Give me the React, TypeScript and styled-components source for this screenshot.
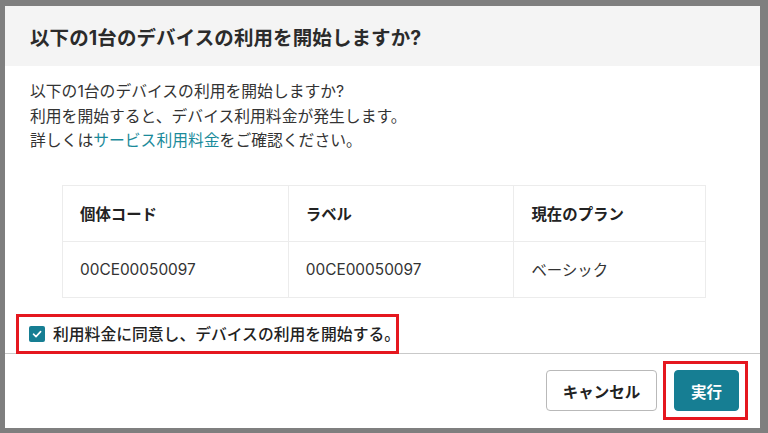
import React from "react";
import styled, { createGlobalStyle } from "styled-components";

const Global = createGlobalStyle`
  html, body { margin: 0; padding: 0; background: #7f7f7f; }
  body { font-family: Inter, "Noto Sans CJK JP", sans-serif; color: #333; }
  * { box-sizing: border-box; }
`;

const Page = styled.div`
  width: 768px;
  height: 433px;
  padding: 6px 8px 5px 5px;
  background: #7f7f7f;
`;

const Dialog = styled.div`
  width: 755px;
  height: 422px;
  background: #fff;
  display: flex;
  flex-direction: column;
`;

const Header = styled.div`
  height: 60px;
  background: #f4f4f4;
  display: flex;
  align-items: center;
  padding: 0 25px;
`;

const Title = styled.h1`
  margin: 0;
  font-size: 19.5px;
  font-weight: 700;
  color: #2b2b2b;
  letter-spacing: 0.1px;
`;

const Body = styled.div`
  flex: 1;
  display: flex;
  flex-direction: column;
  padding-top: 14px;
`;

const Message = styled.p`
  margin: 0;
  padding: 0 25px;
  font-size: 15.8px;
  line-height: 24.5px;
  color: #333;
`;

const Link = styled.a`
  color: #1a8a9a;
  text-decoration: none;
`;

const Table = styled.table`
  margin: 31px 0 0 57px;
  width: 644px;
  border-collapse: collapse;
  font-size: 15.4px;
`;

const Th = styled.th<{ $w: number }>`
  width: ${(p) => p.$w}px;
  height: 56px;
  text-align: left;
  padding: 0 17px;
  font-weight: 700;
  color: #222;
  border: 1px solid #ececec;
`;

const Td = styled.td`
  height: 56px;
  padding: 0 17px;
  color: #333;
  border: 1px solid #ececec;
`;

const CheckRow = styled.div`
  margin: 16px 0 0 11px;
  align-self: flex-start;
  height: 40px;
  width: 383px;
  border: 3px solid #e5171f;
  display: flex;
  align-items: center;
  gap: 8px;
  padding-left: 10px;
  font-size: 15.8px;
  font-weight: 500;
  color: #222;
  position: relative;
  z-index: 1;
  background: #fff;
  white-space: nowrap;
`;

const Box = styled.span`
  width: 16px;
  height: 16px;
  flex: none;
  border-radius: 2px;
  background: #167e93;
  display: inline-flex;
  align-items: center;
  justify-content: center;
`;

const Footer = styled.div`
  border-top: 1px solid #c9c9c9;
  height: 75px;
  margin-top: -1px;
  display: flex;
  justify-content: flex-end;
  align-items: flex-start;
  padding: 7px 12px 0 0;
  gap: 6px;
`;

const Highlight = styled.div`
  border: 3px solid #e5171f;
  padding: 6px 6px 6px 8px;
`;

const Button = styled.button<{ $primary?: boolean }>`
  height: 41px;
  width: ${(p) => (p.$primary ? 65 : 111)}px;
  margin-top: ${(p) => (p.$primary ? 0 : 9)}px;
  border-radius: 4px;
  border: 1px solid ${(p) => (p.$primary ? "#167e93" : "#b9b9b9")};
  background: ${(p) => (p.$primary ? "#167e93" : "#fff")};
  color: ${(p) => (p.$primary ? "#fff" : "#222")};
  font-family: Inter, "Noto Sans CJK JP", sans-serif;
  font-size: 15.5px;
  font-weight: 700;
  cursor: pointer;
`;

export default function App() {
  return (
    <>
      <Global />
      <Page>
        <Dialog>
          <Header>
            <Title>以下の1台のデバイスの利用を開始しますか?</Title>
          </Header>
          <Body>
            <Message>
              以下の1台のデバイスの利用を開始しますか?
              <br />
              利用を開始すると、デバイス利用料金が発生します。
              <br />
              詳しくは<Link href="#">サービス利用料金</Link>をご確認ください。
            </Message>
            <Table>
              <thead>
                <tr>
                  <Th $w={226}>個体コード</Th>
                  <Th $w={226}>ラベル</Th>
                  <Th $w={192}>現在のプラン</Th>
                </tr>
              </thead>
              <tbody>
                <tr>
                  <Td>00CE00050097</Td>
                  <Td>00CE00050097</Td>
                  <Td>ベーシック</Td>
                </tr>
              </tbody>
            </Table>
            <CheckRow>
              <Box>
                <svg width="12" height="12" viewBox="0 0 12 12" fill="none">
                  <path d="M2.5 6.2L5 8.6L9.6 3.6" stroke="#fff" strokeWidth="1.6" strokeLinecap="round" strokeLinejoin="round" />
                </svg>
              </Box>
              利用料金に同意し、デバイスの利用を開始する。
            </CheckRow>
          </Body>
          <Footer>
            <Button>キャンセル</Button>
            <Highlight>
              <Button $primary>実行</Button>
            </Highlight>
          </Footer>
        </Dialog>
      </Page>
    </>
  );
}
